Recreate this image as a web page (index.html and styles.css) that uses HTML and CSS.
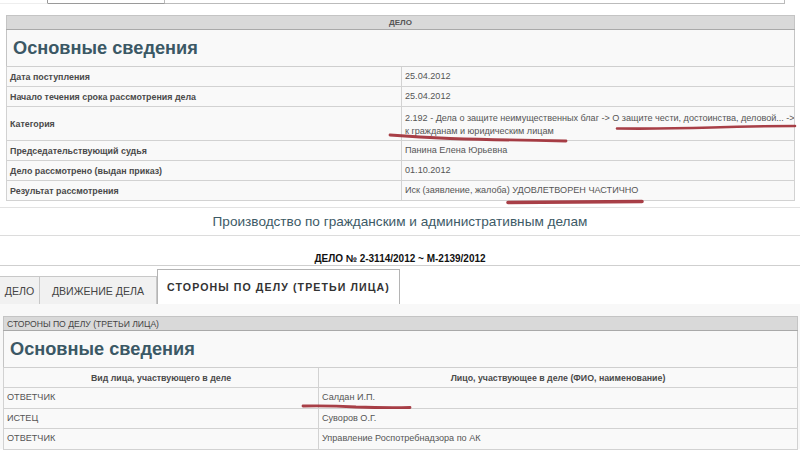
FILE: index.html
```html
<!DOCTYPE html>
<html lang="ru">
<head>
<meta charset="utf-8">
<title>Дело</title>
<link rel="stylesheet" href="styles.css">
</head>
<body>
<div class="page">
  <div class="top-tabs">
    <div class="tt tt-a"></div>
    <div class="tt tt-b"></div>
    <div class="tt tt-c"></div>
  </div>

  <div class="case-box">
    <table class="info">
      <colgroup><col class="col-lbl"><col></colgroup>
      <tr><th colspan="2" class="cap">ДЕЛО</th></tr>
      <tr><td colspan="2" class="title">Основные сведения</td></tr>
      <tr class="r"><td class="lbl">Дата поступления</td><td class="val">25.04.2012</td></tr>
      <tr class="r"><td class="lbl">Начало течения срока рассмотрения дела</td><td class="val">25.04.2012</td></tr>
      <tr class="r tall"><td class="lbl">Категория</td><td class="val cat">2.192 - Дела о защите неимущественных благ -&gt; О защите чести, достоинства, деловой... -&gt;<br>к гражданам и юридическим лицам</td></tr>
      <tr class="r"><td class="lbl">Председательствующий судья</td><td class="val">Панина Елена Юрьевна</td></tr>
      <tr class="r"><td class="lbl">Дело рассмотрено (выдан приказ)</td><td class="val">01.10.2012</td></tr>
      <tr class="r"><td class="lbl">Результат рассмотрения</td><td class="val">Иск (заявление, жалоба) УДОВЛЕТВОРЕН ЧАСТИЧНО</td></tr>
    </table>
  </div>

  <div class="court-title">Производство по гражданским и административным делам</div>
  <div class="case-no">ДЕЛО № 2-3114/2012 ~ М-2139/2012</div>

  <div class="tabs">
    <div class="tab t1">ДЕЛО</div>
    <div class="tab t2">ДВИЖЕНИЕ ДЕЛА</div>
    <div class="tab active">СТОРОНЫ ПО ДЕЛУ (ТРЕТЬИ ЛИЦА)</div>
  </div>

  <div class="panel">
    <table class="parties">
      <colgroup><col class="col-kind"><col></colgroup>
      <tr><th colspan="2" class="cap left">СТОРОНЫ ПО ДЕЛУ (ТРЕТЬИ ЛИЦА)</th></tr>
      <tr><td colspan="2" class="title">Основные сведения</td></tr>
      <tr class="r"><td class="hd">Вид лица, участвующего в деле</td><td class="hd">Лицо, участвующее в деле (ФИО, наименование)</td></tr>
      <tr class="r p"><td class="val">ОТВЕТЧИК</td><td class="val">Салдан И.П.</td></tr>
      <tr class="r p"><td class="val">ИСТЕЦ</td><td class="val">Суворов О.Г.</td></tr>
      <tr class="r p"><td class="val">ОТВЕТЧИК</td><td class="val">Управление Роспотребнадзора по АК</td></tr>
    </table>
  </div>

  <svg class="marks" width="800" height="450" viewBox="0 0 800 450" aria-hidden="true">
    <g fill="none" stroke="#9e2a33" stroke-linecap="round" stroke-opacity="0.9">
      <path d="M617 128.5 Q660 129 712 127.5 Q750 126 795 126" stroke-width="2.6"/>
      <path d="M390 135 Q420 137 450 138.5 Q500 140 566 141" stroke-width="2.8"/>
      <path d="M508 202.5 Q560 202 642 201.5" stroke-width="3.6"/>
      <path d="M303 406 Q330 405.5 356 407 Q385 408 410 407.5" stroke-width="2.8"/>
    </g>
  </svg>
</div>
</body>
</html>
```

FILE: styles.css
```css
* { box-sizing: border-box; }
html, body { margin: 0; padding: 0; background: #fff; }
body { font-family: "Liberation Sans", Arial, sans-serif; color: #444; }
.page { position: relative; width: 800px; height: 450px; overflow: hidden; }

.top-tabs { display: flex; height: 4px; }
.tt { height: 4px; }
.tt-a { width: 48px; border-right: 1px solid #9a9a9a; border-bottom: 1px solid #eee; }
.tt-b { width: 117px; border-right: 1px solid #bbb; border-bottom: 1px solid #9a9a9a; }
.tt-c { width: 620px; border-right: 1px solid #bbb; border-bottom: 1px solid #bbb; }

.case-box { padding: 11px 5px 0 6px; }

table { border-collapse: collapse; background: #f9f9f9; table-layout: fixed; }
.info { width: 789px; border: 1px solid #c4c4c4; }
.parties { width: 795px; border: 1px solid #c4c4c4; }
.col-lbl { width: 395px; }
.col-kind { width: 315px; }

th.cap { height: 14px; padding: 0 3px; background: #d9d9d9; border-bottom: 1px solid #a9a9a9;
  font-size: 8px; font-weight: bold; color: #555; text-align: center; }
th.cap.left { text-align: left; font-weight: normal; font-size: 8.6px; color: #444; }

td.title { height: 37px; padding: 0 6px; font-size: 18.2px; font-weight: bold; color: #3b5865;
  border-bottom: 1px solid #cfcfcf; }

tr.r td { height: 20px; padding: 0 3px; border: 1px solid #d2d2d2; vertical-align: middle; }
tr.tall td { height: 34px; }
tr.p td { height: 20.6px; }
td.lbl { font-size: 8.9px; font-weight: bold; color: #4a4a4a; }
td.val { font-size: 9.1px; color: #555; line-height: 13px; white-space: nowrap; overflow: hidden; }
tr.r td.cat { padding: 3px 0 0 3px; letter-spacing: -0.02px; font-size: 9.1px; }
td.hd { font-size: 8.8px; font-weight: bold; color: #4a4a4a; text-align: center; }

.court-title { margin-top: 6px; height: 29px; border-top: 1px solid #e2e2e2; border-bottom: 1px solid #dcdcdc;
  display: flex; align-items: center; justify-content: center;
  font-size: 13.6px; color: #3d5a66; }

.case-no { height: 30px; border-bottom: 1px solid #cfcfcf; display: flex; align-items: flex-end;
  justify-content: center; padding-bottom: 1px;
  font-size: 10px; font-weight: bold; color: #111; }

.tabs { display: flex; align-items: flex-end; height: 38px; background: #fff; }
.tab { height: 28px; display: flex; align-items: center; justify-content: center;
  background: #f1f1f1; border: 1px solid #c8c8c8; border-bottom: none;
  font-size: 10.6px; color: #444; }
.t1 { width: 40px; border-left: none; }
.t2 { width: 117px; border-left: none; }
.active { width: 243px; height: 35px; background: #fff; border: 1px solid #b4b4b4; border-bottom: none;
  font-weight: bold; color: #333; letter-spacing: 1.1px; font-size: 10.6px; }

.panel { background: #f8f8f8; padding: 12px 2px 0 3px; height: 145px; }

.marks { position: absolute; left: 0; top: 0; pointer-events: none; }
```
